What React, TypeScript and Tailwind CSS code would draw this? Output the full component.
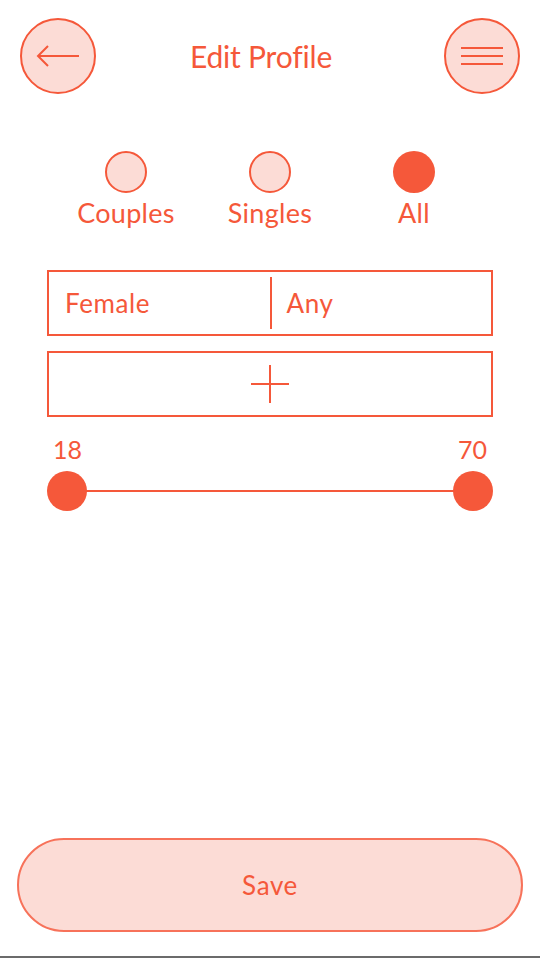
import { useState } from "react"

const font = { fontFamily: "Lato, 'Open Sans', sans-serif" }

export default function App() {
    const [filter, setFilter] = useState("All")
    const options = ["Couples", "Singles", "All"]

    return (
        <div className="flex flex-col w-[540px] h-[958px] bg-white text-[#f5583a]" style={font}>
            {/* Header */}
            <header className="flex items-center justify-between px-[20px] pt-[18px]">
                <button className="flex items-center justify-center w-[76px] h-[76px] rounded-full border-2 border-[#f5583a] bg-[#fcdcd6]">
                    <svg width="44" height="22" viewBox="0 0 44 22" fill="none" stroke="#f5583a" strokeWidth="2">
                        <path d="M2 11 H43" />
                        <path d="M12 1 L2 11 L12 21" />
                    </svg>
                </button>
                <h1 className="mr-[18px] text-[30px] leading-none tracking-[-0.2px]">Edit Profile</h1>
                <button className="flex items-center justify-center w-[76px] h-[76px] rounded-full border-2 border-[#f5583a] bg-[#fcdcd6]">
                    <svg width="44" height="20" viewBox="0 0 44 20" fill="none" stroke="#f5583a" strokeWidth="2">
                        <path d="M1 2 H43" />
                        <path d="M1 10 H43" />
                        <path d="M1 18 H43" />
                    </svg>
                </button>
            </header>

            {/* Filter */}
            <div className="grid grid-cols-3 w-[432px] mx-auto mt-[57px]">
                {options.map((opt) => (
                    <button key={opt} className="flex flex-col items-center" onClick={() => setFilter(opt)}>
                        <span
                            className={
                                filter === opt
                                    ? "w-[42px] h-[42px] rounded-full bg-[#f5583a]"
                                    : "w-[42px] h-[42px] rounded-full border-2 border-[#f5583a] bg-[#fcdcd6]"
                            }
                        />
                        <span className="mt-[4px] text-[27px] leading-[32px] tracking-[0.3px]">{opt}</span>
                    </button>
                ))}
            </div>

            {/* Gender */}
            <div className="mx-[47px] mt-[41px] flex h-[66px] border-2 border-[#f5583a]">
                <div className="flex flex-1 items-center pl-[16px] text-[26px] tracking-[0.6px]">Female</div>
                <div className="my-[5px] w-[2px] bg-[#f5583a]" />
                <div className="flex flex-1 items-center pl-[15px] text-[26px] tracking-[0.6px]">Any</div>
            </div>

            <button className="mx-[47px] mt-[15px] flex h-[66px] items-center justify-center border-2 border-[#f5583a]">
                <svg width="40" height="40" viewBox="0 0 40 40" fill="none" stroke="#f5583a" strokeWidth="2">
                    <path d="M20 1 V39" />
                    <path d="M1 20 H39" />
                </svg>
            </button>

            {/* Age range */}
            <div className="mx-[47px] mt-[17px]">
                <div className="flex justify-between px-[6px] text-[25px] leading-[30px]">
                    <span>18</span>
                    <span>70</span>
                </div>
                <div className="relative mt-[7px] h-[40px]">
                    <div className="absolute left-[20px] right-[20px] top-[19px] h-[2px] bg-[#f5583a]" />
                    <div className="absolute left-0 top-0 w-[40px] h-[40px] rounded-full bg-[#f5583a]" />
                    <div className="absolute right-0 top-0 w-[40px] h-[40px] rounded-full bg-[#f5583a]" />
                </div>
            </div>

            {/* Save */}
            <button className="mt-auto mx-[17px] mb-[24px] h-[94px] rounded-full border-2 border-[#f7725a] bg-[#fcdcd6] text-[26px] tracking-[0.6px]">
                Save
            </button>
            <div className="h-[2px] bg-[#6b6b6b]" />
        </div>
    )
}
